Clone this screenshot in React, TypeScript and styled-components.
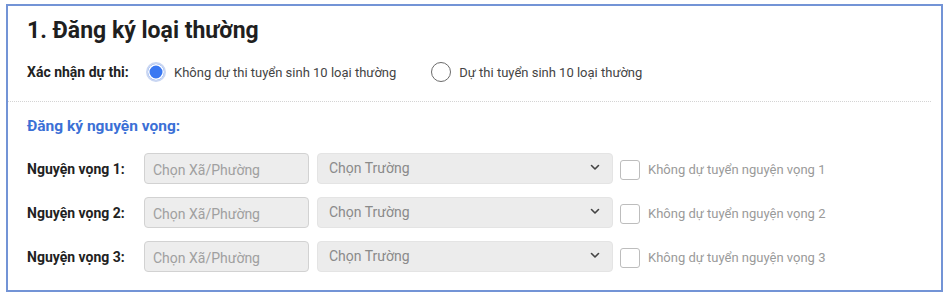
import React from 'react';
import styled, { createGlobalStyle } from 'styled-components';

const GlobalStyle = createGlobalStyle`
	body {
		margin: 0;
		background: #ffffff;
		font-family: Roboto, "Liberation Sans", Arial, sans-serif;
	}
`;

const Page = styled.div`
	padding: 4px 7px 0 6px;
`;

const Card = styled.section`
	border: 2px solid #7394d6;
	height: 288px;
	box-sizing: border-box;
	background: #fff;
`;

const Header = styled.div`
	padding: 11px 0 19px 19px;
	margin-right: 10px;
	border-bottom: 1px dotted #d4d4d4;
`;

const Title = styled.h1`
	margin: 0;
	font-size: 23px;
	line-height: 28px;
	font-weight: 700;
	color: #1f1f1f;
`;

const ConfirmRow = styled.div`
	display: flex;
	align-items: center;
	margin-top: 17px;
	height: 20px;
`;

const BoldLabel = styled.span<{ $width?: number }>`
	font-size: 14px;
	font-weight: 700;
	color: #222;
	width: ${p => (p.$width ? `${p.$width}px` : 'auto')};
	flex-shrink: 0;
`;

const RadioOption = styled.label`
	display: flex;
	align-items: center;
	gap: 8px;
	font-size: 13px;
	color: #444;
	margin-right: 35px;
	cursor: pointer;
`;

const RadioMark = styled.span<{ $checked?: boolean }>`
	width: 20px;
	height: 20px;
	box-sizing: border-box;
	border-radius: 50%;
	border: ${p => (p.$checked ? '2px solid #c9d6f2' : '1.5px solid #6b6b6b')};
	background: ${p => (p.$checked ? '#3a78f2' : '#fff')};
	box-shadow: ${p => (p.$checked ? 'inset 0 0 0 1.5px #fff' : 'none')};
`;

const Body = styled.div`
	padding: 14px 0 0 19px;
`;

const SubTitle = styled.h2`
	margin: 0;
	font-size: 15.5px;
	line-height: 20px;
	font-weight: 700;
	color: #3b70d6;
`;

const Rows = styled.div`
	display: flex;
	flex-direction: column;
	gap: 13px;
	margin-top: 17px;
`;

const Row = styled.div`
	display: flex;
	align-items: center;
	height: 31px;
`;

const Field = styled.div`
	width: 165px;
	height: 31px;
	box-sizing: border-box;
	border: 1px solid #d2d2d2;
	border-radius: 4px;
	background: #ededed;
	padding: 0 8px;
	display: flex;
	align-items: center;
	padding-top: 2px;
	font-size: 14px;
	color: #a0a0a0;
	margin-right: 8px;
`;

const Select = styled.div`
	width: 296px;
	height: 31px;
	box-sizing: border-box;
	border: 1px solid #e4e4e4;
	border-radius: 4px;
	background: #ececec;
	padding: 0 12px 0 11px;
	display: flex;
	align-items: center;
	justify-content: space-between;
	padding-bottom: 2px;
	font-size: 14px;
	color: #8a8a8a;
	margin-right: 7px;
`;

const CheckOption = styled.label`
	display: flex;
	align-items: center;
	gap: 8px;
	font-size: 13px;
	color: #9a9a9a;
	padding-top: 2px;
`;

const CheckBox = styled.span`
	width: 20px;
	height: 20px;
	box-sizing: border-box;
	border: 1px solid #bdbdbd;
	border-radius: 3px;
	background: #fff;
`;

const Chevron = () => (
	<svg width="10" height="7" viewBox="0 0 10 7" fill="none">
		<path d="M1.5 1.5 5 5l3.5-3.5" stroke="#444" strokeWidth="1.6" strokeLinecap="round" strokeLinejoin="round" />
	</svg>
);

const choices = [1, 2, 3];

export default (): JSX.Element => {
	return (
		<Page>
			<GlobalStyle />
			<Card>
				<Header>
					<Title>1. Đăng ký loại thường</Title>
					<ConfirmRow>
						<BoldLabel $width={119}>Xác nhận dự thi:</BoldLabel>
						<RadioOption>
							<RadioMark $checked />
							Không dự thi tuyển sinh 10 loại thường
						</RadioOption>
						<RadioOption>
							<RadioMark />
							Dự thi tuyển sinh 10 loại thường
						</RadioOption>
					</ConfirmRow>
				</Header>
				<Body>
					<SubTitle>Đăng ký nguyện vọng:</SubTitle>
					<Rows>
						{choices.map(n => (
							<Row key={n}>
								<BoldLabel $width={117}>Nguyện vọng {n}:</BoldLabel>
								<Field>Chọn Xã/Phường</Field>
								<Select>
									Chọn Trường
									<Chevron />
								</Select>
								<CheckOption>
									<CheckBox />
									Không dự tuyển nguyện vọng {n}
								</CheckOption>
							</Row>
						))}
					</Rows>
				</Body>
			</Card>
		</Page>
	);
};
